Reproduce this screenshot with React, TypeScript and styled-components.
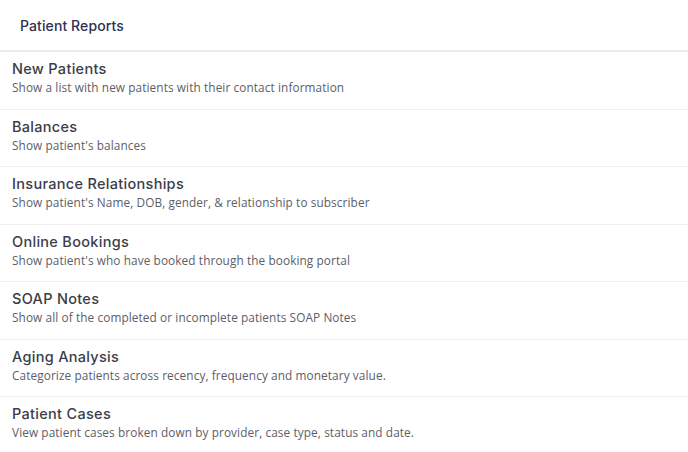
import React from "react";
import styled, { createGlobalStyle } from "styled-components";

const Global = createGlobalStyle`
  html, body { margin: 0; padding: 0; background: #ffffff; }
  body { font-family: "Open Sans", "Noto Sans", Arial, sans-serif; }
`;

const Page = styled.div`
  width: 688px;
  height: 452px;
  background: #ffffff;
  overflow: hidden;
`;

const Header = styled.div`
  height: 50px;
  display: flex;
  align-items: center;
  padding: 0 20px;
  border-bottom: 2px solid #ebebf5;
`;

const HeaderTitle = styled.h1`
  margin: 0;
  font-family: Inter, "Open Sans", sans-serif;
  font-size: 14px;
  font-weight: 500;
  color: #2e3150;
  letter-spacing: 0.1px;
`;

const List = styled.div`
  display: flex;
  flex-direction: column;
`;

const Row = styled.div<{ $last?: boolean }>`
  height: 57.5px;
  padding: 7px 12px 0;
  box-sizing: border-box;
  border-bottom: ${(p) => (p.$last ? "none" : "1.5px solid #efefef")};
  display: flex;
  flex-direction: column;
  gap: 1px;
`;

const RowTitle = styled.div`
  font-family: Inter, "Open Sans", sans-serif;
  font-size: 14.5px;
  font-weight: 500;
  color: #3c3d48;
  line-height: 19px;
  letter-spacing: 0.3px;
`;

const RowDesc = styled.div`
  font-size: 11.8px;
  color: #5d5e68;
  line-height: 17px;
  letter-spacing: 0.1px;
`;

const reports = [
  { title: "New Patients", desc: "Show a list with new patients with their contact information" },
  { title: "Balances", desc: "Show patient's balances" },
  { title: "Insurance Relationships", desc: "Show patient's Name, DOB, gender, & relationship to subscriber" },
  { title: "Online Bookings", desc: "Show patient's who have booked through the booking portal" },
  { title: "SOAP Notes", desc: "Show all of the completed or incomplete patients SOAP Notes" },
  { title: "Aging Analysis", desc: "Categorize patients across recency, frequency and monetary value." },
  { title: "Patient Cases", desc: "View patient cases broken down by provider, case type, status and date." },
];

export default function App() {
  return (
    <Page>
      <Global />
      <Header>
        <HeaderTitle>Patient Reports</HeaderTitle>
      </Header>
      <List>
        {reports.map((r, i) => (
          <Row key={r.title} $last={i === reports.length - 1}>
            <RowTitle>{r.title}</RowTitle>
            <RowDesc>{r.desc}</RowDesc>
          </Row>
        ))}
      </List>
    </Page>
  );
}
